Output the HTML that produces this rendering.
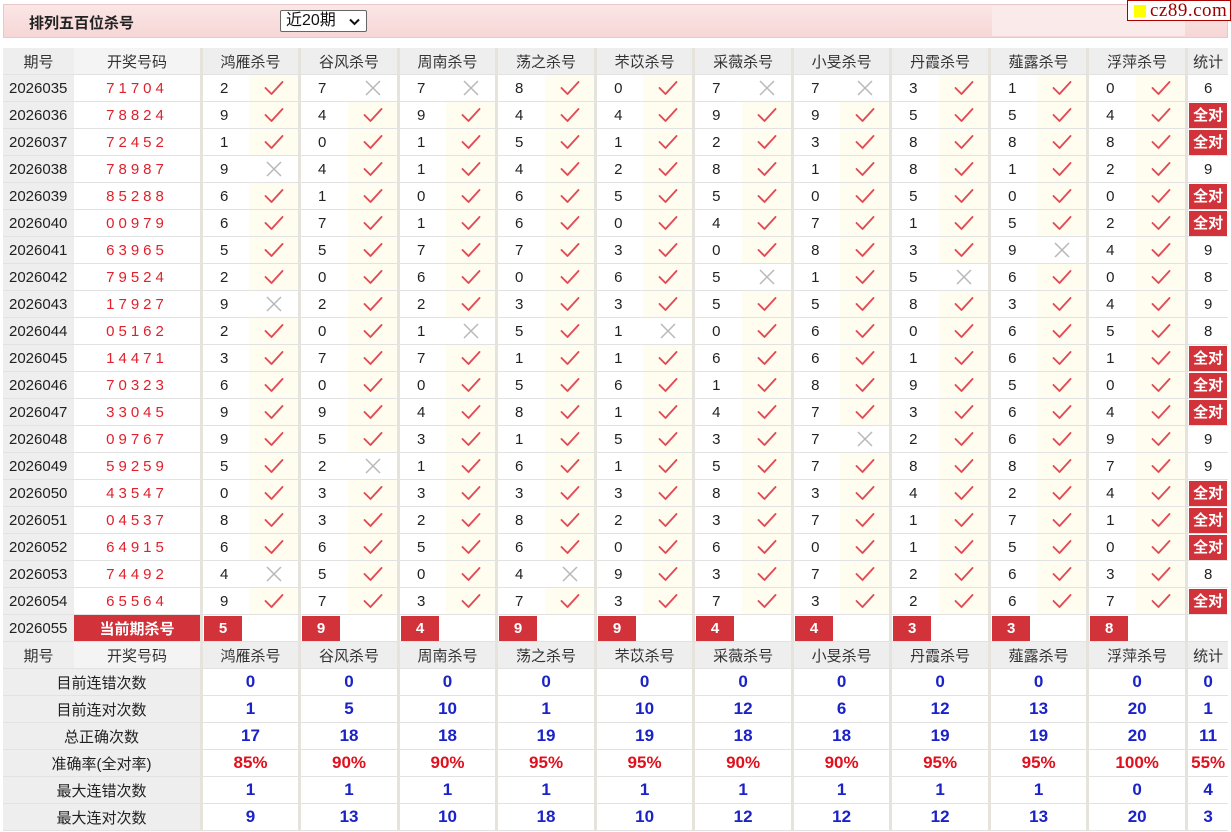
<!DOCTYPE html>
<html><head><meta charset="utf-8"><style>
body{margin:0;background:#fff;font-family:"Liberation Sans","Noto Sans CJK SC",sans-serif;width:1231px;height:832px;overflow:hidden;position:relative}
.top{position:absolute;left:3px;top:4px;width:1225px;height:34px;background:linear-gradient(#fbe6e6,#f6d6d6);border:1px solid #e8c8c8;box-sizing:border-box}
.title{position:absolute;left:29px;top:12px;font-size:15px;font-weight:bold;color:#222}
.sel{position:absolute;left:280px;top:10px;width:87px;height:22px;border:1px solid #666;border-radius:2px;background:#fff;box-sizing:border-box;font-size:16px;line-height:20px;padding-left:5px;color:#111}
.sel svg{position:absolute;right:6px;top:7px}
.rbox{position:absolute;left:992px;top:6px;width:193px;height:30px;background:#fbeaea}
.logo{position:absolute;left:1127px;top:0;width:104px;height:21px;background:#fff;border:1px solid #a00;box-sizing:border-box;font-family:"Liberation Serif",serif;font-size:19px;color:#900;line-height:19px;padding-left:22px;letter-spacing:.5px}
.logo i{position:absolute;left:6px;top:4px;width:12px;height:12px;background:#ff0}
table{position:absolute;left:3px;top:48px;border-collapse:separate;border-spacing:0;table-layout:fixed;width:1225px;font-size:15px}
td{height:26px;padding:0;border-bottom:1px solid #e2e2e2;text-align:center;color:#222;white-space:nowrap;overflow:hidden}
tr.h td{background:#eeeeee;color:#333}
td.q{background:#eeeeee;text-align:left;padding-left:6px}
td.n{color:#e0202c;letter-spacing:4px}
td.v{text-align:left;padding-left:17px}
td.c{background:#fffdf0;border-right:3px solid #e6e3dc}
td.x{background:#fff;border-right:3px solid #e6e3dc}
td.e{border-right:3px solid #e6e3dc}
tr.h td.e{background:#eeeeee}
td.s{background:#fff}
.qd{display:inline-block;background:#d2323a;color:#fff;font-weight:bold;width:38px;height:25px;line-height:25px;text-align:center}
.bd{display:block;background:#d2323a;color:#fff;font-weight:bold;height:25px;line-height:25px;width:38px;margin:0 auto}
td.cur{background:#d2323a;color:#fff;font-weight:bold}
td.k{text-align:left;padding:0}
td.k .qd{margin-left:1px}
td.lab{background:#eeeeee}
td.b{color:#1a22c8;font-weight:bold;font-size:17px}
td.p{color:#e0101c;font-weight:bold;font-size:17px}
svg.m{display:block;margin:0 auto}
</style></head><body>
<svg width="0" height="0" style="position:absolute"><defs>
<symbol id="ck" viewBox="0 0 22 18"><path d="M2.5 9 L8.5 15 L19.5 3" fill="none" stroke="#e24a54" stroke-width="1.9" stroke-linecap="round" stroke-linejoin="round"/></symbol>
<symbol id="xx" viewBox="0 0 18 18"><path d="M2 2 L16 16 M16 2 L2 16" fill="none" stroke="#b8b8b8" stroke-width="1.5"/></symbol>
</defs></svg>
<div class="top"></div>
<div class="title">排列五百位杀号</div>
<div class="sel">近20期<svg width="11" height="8" viewBox="0 0 11 8"><path d="M1 1.5 L5.5 6 L10 1.5" fill="none" stroke="#111" stroke-width="2"/></svg></div>
<div class="rbox"></div>
<div class="logo"><i></i>cz89.com</div>
<table>
<colgroup><col style="width:71px"><col style="width:129px">
<col style="width:46px"><col style="width:52px"><col style="width:47px"><col style="width:52px"><col style="width:46px"><col style="width:52px"><col style="width:47px"><col style="width:52px"><col style="width:46px"><col style="width:52px"><col style="width:47px"><col style="width:52px"><col style="width:46px"><col style="width:52px"><col style="width:47px"><col style="width:52px"><col style="width:46px"><col style="width:52px"><col style="width:47px"><col style="width:52px"><col style="width:40px"></colgroup>
<tr class="h"><td class="q" style="text-align:center;padding:0">期号</td><td style="background:#f4f4f4;border-right:3px solid #e6e3dc">开奖号码</td><td colspan="2" class="e">鸿雁杀号</td><td colspan="2" class="e">谷风杀号</td><td colspan="2" class="e">周南杀号</td><td colspan="2" class="e">荡之杀号</td><td colspan="2" class="e">芣苡杀号</td><td colspan="2" class="e">采薇杀号</td><td colspan="2" class="e">小旻杀号</td><td colspan="2" class="e">丹霞杀号</td><td colspan="2" class="e">薤露杀号</td><td colspan="2" class="e">浮萍杀号</td><td>统计</td></tr>
<tr><td class="q">2026035</td><td class="n e">71704</td><td class="v">2</td><td class="c"><svg class="m" width="22" height="18"><use href="#ck"/></svg></td><td class="v">7</td><td class="x"><svg class="m" width="18" height="18"><use href="#xx"/></svg></td><td class="v">7</td><td class="x"><svg class="m" width="18" height="18"><use href="#xx"/></svg></td><td class="v">8</td><td class="c"><svg class="m" width="22" height="18"><use href="#ck"/></svg></td><td class="v">0</td><td class="c"><svg class="m" width="22" height="18"><use href="#ck"/></svg></td><td class="v">7</td><td class="x"><svg class="m" width="18" height="18"><use href="#xx"/></svg></td><td class="v">7</td><td class="x"><svg class="m" width="18" height="18"><use href="#xx"/></svg></td><td class="v">3</td><td class="c"><svg class="m" width="22" height="18"><use href="#ck"/></svg></td><td class="v">1</td><td class="c"><svg class="m" width="22" height="18"><use href="#ck"/></svg></td><td class="v">0</td><td class="c"><svg class="m" width="22" height="18"><use href="#ck"/></svg></td><td>6</td></tr>
<tr><td class="q">2026036</td><td class="n e">78824</td><td class="v">9</td><td class="c"><svg class="m" width="22" height="18"><use href="#ck"/></svg></td><td class="v">4</td><td class="c"><svg class="m" width="22" height="18"><use href="#ck"/></svg></td><td class="v">9</td><td class="c"><svg class="m" width="22" height="18"><use href="#ck"/></svg></td><td class="v">4</td><td class="c"><svg class="m" width="22" height="18"><use href="#ck"/></svg></td><td class="v">4</td><td class="c"><svg class="m" width="22" height="18"><use href="#ck"/></svg></td><td class="v">9</td><td class="c"><svg class="m" width="22" height="18"><use href="#ck"/></svg></td><td class="v">9</td><td class="c"><svg class="m" width="22" height="18"><use href="#ck"/></svg></td><td class="v">5</td><td class="c"><svg class="m" width="22" height="18"><use href="#ck"/></svg></td><td class="v">5</td><td class="c"><svg class="m" width="22" height="18"><use href="#ck"/></svg></td><td class="v">4</td><td class="c"><svg class="m" width="22" height="18"><use href="#ck"/></svg></td><td><span class="bd">全对</span></td></tr>
<tr><td class="q">2026037</td><td class="n e">72452</td><td class="v">1</td><td class="c"><svg class="m" width="22" height="18"><use href="#ck"/></svg></td><td class="v">0</td><td class="c"><svg class="m" width="22" height="18"><use href="#ck"/></svg></td><td class="v">1</td><td class="c"><svg class="m" width="22" height="18"><use href="#ck"/></svg></td><td class="v">5</td><td class="c"><svg class="m" width="22" height="18"><use href="#ck"/></svg></td><td class="v">1</td><td class="c"><svg class="m" width="22" height="18"><use href="#ck"/></svg></td><td class="v">2</td><td class="c"><svg class="m" width="22" height="18"><use href="#ck"/></svg></td><td class="v">3</td><td class="c"><svg class="m" width="22" height="18"><use href="#ck"/></svg></td><td class="v">8</td><td class="c"><svg class="m" width="22" height="18"><use href="#ck"/></svg></td><td class="v">8</td><td class="c"><svg class="m" width="22" height="18"><use href="#ck"/></svg></td><td class="v">8</td><td class="c"><svg class="m" width="22" height="18"><use href="#ck"/></svg></td><td><span class="bd">全对</span></td></tr>
<tr><td class="q">2026038</td><td class="n e">78987</td><td class="v">9</td><td class="x"><svg class="m" width="18" height="18"><use href="#xx"/></svg></td><td class="v">4</td><td class="c"><svg class="m" width="22" height="18"><use href="#ck"/></svg></td><td class="v">1</td><td class="c"><svg class="m" width="22" height="18"><use href="#ck"/></svg></td><td class="v">4</td><td class="c"><svg class="m" width="22" height="18"><use href="#ck"/></svg></td><td class="v">2</td><td class="c"><svg class="m" width="22" height="18"><use href="#ck"/></svg></td><td class="v">8</td><td class="c"><svg class="m" width="22" height="18"><use href="#ck"/></svg></td><td class="v">1</td><td class="c"><svg class="m" width="22" height="18"><use href="#ck"/></svg></td><td class="v">8</td><td class="c"><svg class="m" width="22" height="18"><use href="#ck"/></svg></td><td class="v">1</td><td class="c"><svg class="m" width="22" height="18"><use href="#ck"/></svg></td><td class="v">2</td><td class="c"><svg class="m" width="22" height="18"><use href="#ck"/></svg></td><td>9</td></tr>
<tr><td class="q">2026039</td><td class="n e">85288</td><td class="v">6</td><td class="c"><svg class="m" width="22" height="18"><use href="#ck"/></svg></td><td class="v">1</td><td class="c"><svg class="m" width="22" height="18"><use href="#ck"/></svg></td><td class="v">0</td><td class="c"><svg class="m" width="22" height="18"><use href="#ck"/></svg></td><td class="v">6</td><td class="c"><svg class="m" width="22" height="18"><use href="#ck"/></svg></td><td class="v">5</td><td class="c"><svg class="m" width="22" height="18"><use href="#ck"/></svg></td><td class="v">5</td><td class="c"><svg class="m" width="22" height="18"><use href="#ck"/></svg></td><td class="v">0</td><td class="c"><svg class="m" width="22" height="18"><use href="#ck"/></svg></td><td class="v">5</td><td class="c"><svg class="m" width="22" height="18"><use href="#ck"/></svg></td><td class="v">0</td><td class="c"><svg class="m" width="22" height="18"><use href="#ck"/></svg></td><td class="v">0</td><td class="c"><svg class="m" width="22" height="18"><use href="#ck"/></svg></td><td><span class="bd">全对</span></td></tr>
<tr><td class="q">2026040</td><td class="n e">00979</td><td class="v">6</td><td class="c"><svg class="m" width="22" height="18"><use href="#ck"/></svg></td><td class="v">7</td><td class="c"><svg class="m" width="22" height="18"><use href="#ck"/></svg></td><td class="v">1</td><td class="c"><svg class="m" width="22" height="18"><use href="#ck"/></svg></td><td class="v">6</td><td class="c"><svg class="m" width="22" height="18"><use href="#ck"/></svg></td><td class="v">0</td><td class="c"><svg class="m" width="22" height="18"><use href="#ck"/></svg></td><td class="v">4</td><td class="c"><svg class="m" width="22" height="18"><use href="#ck"/></svg></td><td class="v">7</td><td class="c"><svg class="m" width="22" height="18"><use href="#ck"/></svg></td><td class="v">1</td><td class="c"><svg class="m" width="22" height="18"><use href="#ck"/></svg></td><td class="v">5</td><td class="c"><svg class="m" width="22" height="18"><use href="#ck"/></svg></td><td class="v">2</td><td class="c"><svg class="m" width="22" height="18"><use href="#ck"/></svg></td><td><span class="bd">全对</span></td></tr>
<tr><td class="q">2026041</td><td class="n e">63965</td><td class="v">5</td><td class="c"><svg class="m" width="22" height="18"><use href="#ck"/></svg></td><td class="v">5</td><td class="c"><svg class="m" width="22" height="18"><use href="#ck"/></svg></td><td class="v">7</td><td class="c"><svg class="m" width="22" height="18"><use href="#ck"/></svg></td><td class="v">7</td><td class="c"><svg class="m" width="22" height="18"><use href="#ck"/></svg></td><td class="v">3</td><td class="c"><svg class="m" width="22" height="18"><use href="#ck"/></svg></td><td class="v">0</td><td class="c"><svg class="m" width="22" height="18"><use href="#ck"/></svg></td><td class="v">8</td><td class="c"><svg class="m" width="22" height="18"><use href="#ck"/></svg></td><td class="v">3</td><td class="c"><svg class="m" width="22" height="18"><use href="#ck"/></svg></td><td class="v">9</td><td class="x"><svg class="m" width="18" height="18"><use href="#xx"/></svg></td><td class="v">4</td><td class="c"><svg class="m" width="22" height="18"><use href="#ck"/></svg></td><td>9</td></tr>
<tr><td class="q">2026042</td><td class="n e">79524</td><td class="v">2</td><td class="c"><svg class="m" width="22" height="18"><use href="#ck"/></svg></td><td class="v">0</td><td class="c"><svg class="m" width="22" height="18"><use href="#ck"/></svg></td><td class="v">6</td><td class="c"><svg class="m" width="22" height="18"><use href="#ck"/></svg></td><td class="v">0</td><td class="c"><svg class="m" width="22" height="18"><use href="#ck"/></svg></td><td class="v">6</td><td class="c"><svg class="m" width="22" height="18"><use href="#ck"/></svg></td><td class="v">5</td><td class="x"><svg class="m" width="18" height="18"><use href="#xx"/></svg></td><td class="v">1</td><td class="c"><svg class="m" width="22" height="18"><use href="#ck"/></svg></td><td class="v">5</td><td class="x"><svg class="m" width="18" height="18"><use href="#xx"/></svg></td><td class="v">6</td><td class="c"><svg class="m" width="22" height="18"><use href="#ck"/></svg></td><td class="v">0</td><td class="c"><svg class="m" width="22" height="18"><use href="#ck"/></svg></td><td>8</td></tr>
<tr><td class="q">2026043</td><td class="n e">17927</td><td class="v">9</td><td class="x"><svg class="m" width="18" height="18"><use href="#xx"/></svg></td><td class="v">2</td><td class="c"><svg class="m" width="22" height="18"><use href="#ck"/></svg></td><td class="v">2</td><td class="c"><svg class="m" width="22" height="18"><use href="#ck"/></svg></td><td class="v">3</td><td class="c"><svg class="m" width="22" height="18"><use href="#ck"/></svg></td><td class="v">3</td><td class="c"><svg class="m" width="22" height="18"><use href="#ck"/></svg></td><td class="v">5</td><td class="c"><svg class="m" width="22" height="18"><use href="#ck"/></svg></td><td class="v">5</td><td class="c"><svg class="m" width="22" height="18"><use href="#ck"/></svg></td><td class="v">8</td><td class="c"><svg class="m" width="22" height="18"><use href="#ck"/></svg></td><td class="v">3</td><td class="c"><svg class="m" width="22" height="18"><use href="#ck"/></svg></td><td class="v">4</td><td class="c"><svg class="m" width="22" height="18"><use href="#ck"/></svg></td><td>9</td></tr>
<tr><td class="q">2026044</td><td class="n e">05162</td><td class="v">2</td><td class="c"><svg class="m" width="22" height="18"><use href="#ck"/></svg></td><td class="v">0</td><td class="c"><svg class="m" width="22" height="18"><use href="#ck"/></svg></td><td class="v">1</td><td class="x"><svg class="m" width="18" height="18"><use href="#xx"/></svg></td><td class="v">5</td><td class="c"><svg class="m" width="22" height="18"><use href="#ck"/></svg></td><td class="v">1</td><td class="x"><svg class="m" width="18" height="18"><use href="#xx"/></svg></td><td class="v">0</td><td class="c"><svg class="m" width="22" height="18"><use href="#ck"/></svg></td><td class="v">6</td><td class="c"><svg class="m" width="22" height="18"><use href="#ck"/></svg></td><td class="v">0</td><td class="c"><svg class="m" width="22" height="18"><use href="#ck"/></svg></td><td class="v">6</td><td class="c"><svg class="m" width="22" height="18"><use href="#ck"/></svg></td><td class="v">5</td><td class="c"><svg class="m" width="22" height="18"><use href="#ck"/></svg></td><td>8</td></tr>
<tr><td class="q">2026045</td><td class="n e">14471</td><td class="v">3</td><td class="c"><svg class="m" width="22" height="18"><use href="#ck"/></svg></td><td class="v">7</td><td class="c"><svg class="m" width="22" height="18"><use href="#ck"/></svg></td><td class="v">7</td><td class="c"><svg class="m" width="22" height="18"><use href="#ck"/></svg></td><td class="v">1</td><td class="c"><svg class="m" width="22" height="18"><use href="#ck"/></svg></td><td class="v">1</td><td class="c"><svg class="m" width="22" height="18"><use href="#ck"/></svg></td><td class="v">6</td><td class="c"><svg class="m" width="22" height="18"><use href="#ck"/></svg></td><td class="v">6</td><td class="c"><svg class="m" width="22" height="18"><use href="#ck"/></svg></td><td class="v">1</td><td class="c"><svg class="m" width="22" height="18"><use href="#ck"/></svg></td><td class="v">6</td><td class="c"><svg class="m" width="22" height="18"><use href="#ck"/></svg></td><td class="v">1</td><td class="c"><svg class="m" width="22" height="18"><use href="#ck"/></svg></td><td><span class="bd">全对</span></td></tr>
<tr><td class="q">2026046</td><td class="n e">70323</td><td class="v">6</td><td class="c"><svg class="m" width="22" height="18"><use href="#ck"/></svg></td><td class="v">0</td><td class="c"><svg class="m" width="22" height="18"><use href="#ck"/></svg></td><td class="v">0</td><td class="c"><svg class="m" width="22" height="18"><use href="#ck"/></svg></td><td class="v">5</td><td class="c"><svg class="m" width="22" height="18"><use href="#ck"/></svg></td><td class="v">6</td><td class="c"><svg class="m" width="22" height="18"><use href="#ck"/></svg></td><td class="v">1</td><td class="c"><svg class="m" width="22" height="18"><use href="#ck"/></svg></td><td class="v">8</td><td class="c"><svg class="m" width="22" height="18"><use href="#ck"/></svg></td><td class="v">9</td><td class="c"><svg class="m" width="22" height="18"><use href="#ck"/></svg></td><td class="v">5</td><td class="c"><svg class="m" width="22" height="18"><use href="#ck"/></svg></td><td class="v">0</td><td class="c"><svg class="m" width="22" height="18"><use href="#ck"/></svg></td><td><span class="bd">全对</span></td></tr>
<tr><td class="q">2026047</td><td class="n e">33045</td><td class="v">9</td><td class="c"><svg class="m" width="22" height="18"><use href="#ck"/></svg></td><td class="v">9</td><td class="c"><svg class="m" width="22" height="18"><use href="#ck"/></svg></td><td class="v">4</td><td class="c"><svg class="m" width="22" height="18"><use href="#ck"/></svg></td><td class="v">8</td><td class="c"><svg class="m" width="22" height="18"><use href="#ck"/></svg></td><td class="v">1</td><td class="c"><svg class="m" width="22" height="18"><use href="#ck"/></svg></td><td class="v">4</td><td class="c"><svg class="m" width="22" height="18"><use href="#ck"/></svg></td><td class="v">7</td><td class="c"><svg class="m" width="22" height="18"><use href="#ck"/></svg></td><td class="v">3</td><td class="c"><svg class="m" width="22" height="18"><use href="#ck"/></svg></td><td class="v">6</td><td class="c"><svg class="m" width="22" height="18"><use href="#ck"/></svg></td><td class="v">4</td><td class="c"><svg class="m" width="22" height="18"><use href="#ck"/></svg></td><td><span class="bd">全对</span></td></tr>
<tr><td class="q">2026048</td><td class="n e">09767</td><td class="v">9</td><td class="c"><svg class="m" width="22" height="18"><use href="#ck"/></svg></td><td class="v">5</td><td class="c"><svg class="m" width="22" height="18"><use href="#ck"/></svg></td><td class="v">3</td><td class="c"><svg class="m" width="22" height="18"><use href="#ck"/></svg></td><td class="v">1</td><td class="c"><svg class="m" width="22" height="18"><use href="#ck"/></svg></td><td class="v">5</td><td class="c"><svg class="m" width="22" height="18"><use href="#ck"/></svg></td><td class="v">3</td><td class="c"><svg class="m" width="22" height="18"><use href="#ck"/></svg></td><td class="v">7</td><td class="x"><svg class="m" width="18" height="18"><use href="#xx"/></svg></td><td class="v">2</td><td class="c"><svg class="m" width="22" height="18"><use href="#ck"/></svg></td><td class="v">6</td><td class="c"><svg class="m" width="22" height="18"><use href="#ck"/></svg></td><td class="v">9</td><td class="c"><svg class="m" width="22" height="18"><use href="#ck"/></svg></td><td>9</td></tr>
<tr><td class="q">2026049</td><td class="n e">59259</td><td class="v">5</td><td class="c"><svg class="m" width="22" height="18"><use href="#ck"/></svg></td><td class="v">2</td><td class="x"><svg class="m" width="18" height="18"><use href="#xx"/></svg></td><td class="v">1</td><td class="c"><svg class="m" width="22" height="18"><use href="#ck"/></svg></td><td class="v">6</td><td class="c"><svg class="m" width="22" height="18"><use href="#ck"/></svg></td><td class="v">1</td><td class="c"><svg class="m" width="22" height="18"><use href="#ck"/></svg></td><td class="v">5</td><td class="c"><svg class="m" width="22" height="18"><use href="#ck"/></svg></td><td class="v">7</td><td class="c"><svg class="m" width="22" height="18"><use href="#ck"/></svg></td><td class="v">8</td><td class="c"><svg class="m" width="22" height="18"><use href="#ck"/></svg></td><td class="v">8</td><td class="c"><svg class="m" width="22" height="18"><use href="#ck"/></svg></td><td class="v">7</td><td class="c"><svg class="m" width="22" height="18"><use href="#ck"/></svg></td><td>9</td></tr>
<tr><td class="q">2026050</td><td class="n e">43547</td><td class="v">0</td><td class="c"><svg class="m" width="22" height="18"><use href="#ck"/></svg></td><td class="v">3</td><td class="c"><svg class="m" width="22" height="18"><use href="#ck"/></svg></td><td class="v">3</td><td class="c"><svg class="m" width="22" height="18"><use href="#ck"/></svg></td><td class="v">3</td><td class="c"><svg class="m" width="22" height="18"><use href="#ck"/></svg></td><td class="v">3</td><td class="c"><svg class="m" width="22" height="18"><use href="#ck"/></svg></td><td class="v">8</td><td class="c"><svg class="m" width="22" height="18"><use href="#ck"/></svg></td><td class="v">3</td><td class="c"><svg class="m" width="22" height="18"><use href="#ck"/></svg></td><td class="v">4</td><td class="c"><svg class="m" width="22" height="18"><use href="#ck"/></svg></td><td class="v">2</td><td class="c"><svg class="m" width="22" height="18"><use href="#ck"/></svg></td><td class="v">4</td><td class="c"><svg class="m" width="22" height="18"><use href="#ck"/></svg></td><td><span class="bd">全对</span></td></tr>
<tr><td class="q">2026051</td><td class="n e">04537</td><td class="v">8</td><td class="c"><svg class="m" width="22" height="18"><use href="#ck"/></svg></td><td class="v">3</td><td class="c"><svg class="m" width="22" height="18"><use href="#ck"/></svg></td><td class="v">2</td><td class="c"><svg class="m" width="22" height="18"><use href="#ck"/></svg></td><td class="v">8</td><td class="c"><svg class="m" width="22" height="18"><use href="#ck"/></svg></td><td class="v">2</td><td class="c"><svg class="m" width="22" height="18"><use href="#ck"/></svg></td><td class="v">3</td><td class="c"><svg class="m" width="22" height="18"><use href="#ck"/></svg></td><td class="v">7</td><td class="c"><svg class="m" width="22" height="18"><use href="#ck"/></svg></td><td class="v">1</td><td class="c"><svg class="m" width="22" height="18"><use href="#ck"/></svg></td><td class="v">7</td><td class="c"><svg class="m" width="22" height="18"><use href="#ck"/></svg></td><td class="v">1</td><td class="c"><svg class="m" width="22" height="18"><use href="#ck"/></svg></td><td><span class="bd">全对</span></td></tr>
<tr><td class="q">2026052</td><td class="n e">64915</td><td class="v">6</td><td class="c"><svg class="m" width="22" height="18"><use href="#ck"/></svg></td><td class="v">6</td><td class="c"><svg class="m" width="22" height="18"><use href="#ck"/></svg></td><td class="v">5</td><td class="c"><svg class="m" width="22" height="18"><use href="#ck"/></svg></td><td class="v">6</td><td class="c"><svg class="m" width="22" height="18"><use href="#ck"/></svg></td><td class="v">0</td><td class="c"><svg class="m" width="22" height="18"><use href="#ck"/></svg></td><td class="v">6</td><td class="c"><svg class="m" width="22" height="18"><use href="#ck"/></svg></td><td class="v">0</td><td class="c"><svg class="m" width="22" height="18"><use href="#ck"/></svg></td><td class="v">1</td><td class="c"><svg class="m" width="22" height="18"><use href="#ck"/></svg></td><td class="v">5</td><td class="c"><svg class="m" width="22" height="18"><use href="#ck"/></svg></td><td class="v">0</td><td class="c"><svg class="m" width="22" height="18"><use href="#ck"/></svg></td><td><span class="bd">全对</span></td></tr>
<tr><td class="q">2026053</td><td class="n e">74492</td><td class="v">4</td><td class="x"><svg class="m" width="18" height="18"><use href="#xx"/></svg></td><td class="v">5</td><td class="c"><svg class="m" width="22" height="18"><use href="#ck"/></svg></td><td class="v">0</td><td class="c"><svg class="m" width="22" height="18"><use href="#ck"/></svg></td><td class="v">4</td><td class="x"><svg class="m" width="18" height="18"><use href="#xx"/></svg></td><td class="v">9</td><td class="c"><svg class="m" width="22" height="18"><use href="#ck"/></svg></td><td class="v">3</td><td class="c"><svg class="m" width="22" height="18"><use href="#ck"/></svg></td><td class="v">7</td><td class="c"><svg class="m" width="22" height="18"><use href="#ck"/></svg></td><td class="v">2</td><td class="c"><svg class="m" width="22" height="18"><use href="#ck"/></svg></td><td class="v">6</td><td class="c"><svg class="m" width="22" height="18"><use href="#ck"/></svg></td><td class="v">3</td><td class="c"><svg class="m" width="22" height="18"><use href="#ck"/></svg></td><td>8</td></tr>
<tr><td class="q">2026054</td><td class="n e">65564</td><td class="v">9</td><td class="c"><svg class="m" width="22" height="18"><use href="#ck"/></svg></td><td class="v">7</td><td class="c"><svg class="m" width="22" height="18"><use href="#ck"/></svg></td><td class="v">3</td><td class="c"><svg class="m" width="22" height="18"><use href="#ck"/></svg></td><td class="v">7</td><td class="c"><svg class="m" width="22" height="18"><use href="#ck"/></svg></td><td class="v">3</td><td class="c"><svg class="m" width="22" height="18"><use href="#ck"/></svg></td><td class="v">7</td><td class="c"><svg class="m" width="22" height="18"><use href="#ck"/></svg></td><td class="v">3</td><td class="c"><svg class="m" width="22" height="18"><use href="#ck"/></svg></td><td class="v">2</td><td class="c"><svg class="m" width="22" height="18"><use href="#ck"/></svg></td><td class="v">6</td><td class="c"><svg class="m" width="22" height="18"><use href="#ck"/></svg></td><td class="v">7</td><td class="c"><svg class="m" width="22" height="18"><use href="#ck"/></svg></td><td><span class="bd">全对</span></td></tr>
<tr><td class="q">2026055</td><td class="cur" style="border-right:3px solid #e6e3dc">当前期杀号</td><td colspan="2" class="k e"><span class="qd">5</span></td><td colspan="2" class="k e"><span class="qd">9</span></td><td colspan="2" class="k e"><span class="qd">4</span></td><td colspan="2" class="k e"><span class="qd">9</span></td><td colspan="2" class="k e"><span class="qd">9</span></td><td colspan="2" class="k e"><span class="qd">4</span></td><td colspan="2" class="k e"><span class="qd">4</span></td><td colspan="2" class="k e"><span class="qd">3</span></td><td colspan="2" class="k e"><span class="qd">3</span></td><td colspan="2" class="k e"><span class="qd">8</span></td><td></td></tr>
<tr class="h"><td class="q" style="text-align:center;padding:0">期号</td><td style="background:#f4f4f4;border-right:3px solid #e6e3dc">开奖号码</td><td colspan="2" class="e">鸿雁杀号</td><td colspan="2" class="e">谷风杀号</td><td colspan="2" class="e">周南杀号</td><td colspan="2" class="e">荡之杀号</td><td colspan="2" class="e">芣苡杀号</td><td colspan="2" class="e">采薇杀号</td><td colspan="2" class="e">小旻杀号</td><td colspan="2" class="e">丹霞杀号</td><td colspan="2" class="e">薤露杀号</td><td colspan="2" class="e">浮萍杀号</td><td>统计</td></tr>
<tr><td colspan="2" class="lab e">目前连错次数</td><td colspan="2" class="b e">0</td><td colspan="2" class="b e">0</td><td colspan="2" class="b e">0</td><td colspan="2" class="b e">0</td><td colspan="2" class="b e">0</td><td colspan="2" class="b e">0</td><td colspan="2" class="b e">0</td><td colspan="2" class="b e">0</td><td colspan="2" class="b e">0</td><td colspan="2" class="b e">0</td><td class="b">0</td></tr>
<tr><td colspan="2" class="lab e">目前连对次数</td><td colspan="2" class="b e">1</td><td colspan="2" class="b e">5</td><td colspan="2" class="b e">10</td><td colspan="2" class="b e">1</td><td colspan="2" class="b e">10</td><td colspan="2" class="b e">12</td><td colspan="2" class="b e">6</td><td colspan="2" class="b e">12</td><td colspan="2" class="b e">13</td><td colspan="2" class="b e">20</td><td class="b">1</td></tr>
<tr><td colspan="2" class="lab e">总正确次数</td><td colspan="2" class="b e">17</td><td colspan="2" class="b e">18</td><td colspan="2" class="b e">18</td><td colspan="2" class="b e">19</td><td colspan="2" class="b e">19</td><td colspan="2" class="b e">18</td><td colspan="2" class="b e">18</td><td colspan="2" class="b e">19</td><td colspan="2" class="b e">19</td><td colspan="2" class="b e">20</td><td class="b">11</td></tr>
<tr><td colspan="2" class="lab e">准确率(全对率)</td><td colspan="2" class="p e">85%</td><td colspan="2" class="p e">90%</td><td colspan="2" class="p e">90%</td><td colspan="2" class="p e">95%</td><td colspan="2" class="p e">95%</td><td colspan="2" class="p e">90%</td><td colspan="2" class="p e">90%</td><td colspan="2" class="p e">95%</td><td colspan="2" class="p e">95%</td><td colspan="2" class="p e">100%</td><td class="p">55%</td></tr>
<tr><td colspan="2" class="lab e">最大连错次数</td><td colspan="2" class="b e">1</td><td colspan="2" class="b e">1</td><td colspan="2" class="b e">1</td><td colspan="2" class="b e">1</td><td colspan="2" class="b e">1</td><td colspan="2" class="b e">1</td><td colspan="2" class="b e">1</td><td colspan="2" class="b e">1</td><td colspan="2" class="b e">1</td><td colspan="2" class="b e">0</td><td class="b">4</td></tr>
<tr><td colspan="2" class="lab e">最大连对次数</td><td colspan="2" class="b e">9</td><td colspan="2" class="b e">13</td><td colspan="2" class="b e">10</td><td colspan="2" class="b e">18</td><td colspan="2" class="b e">10</td><td colspan="2" class="b e">12</td><td colspan="2" class="b e">12</td><td colspan="2" class="b e">12</td><td colspan="2" class="b e">13</td><td colspan="2" class="b e">20</td><td class="b">3</td></tr>
</table>
</body></html>
